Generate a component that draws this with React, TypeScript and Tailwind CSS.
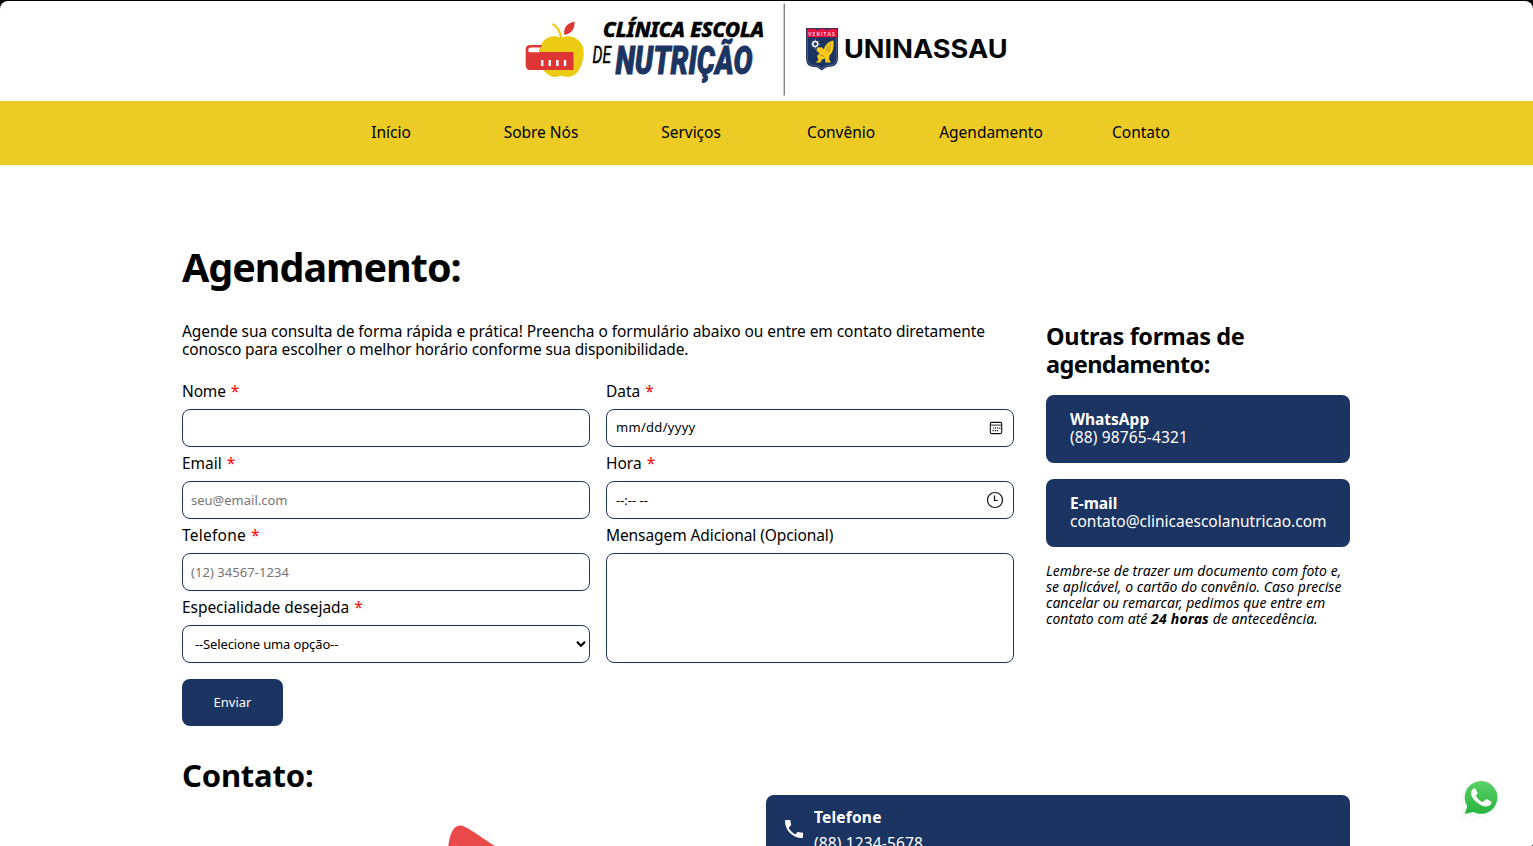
import type { ReactNode } from "react";

const navItems = ["Início", "Sobre Nós", "Serviços", "Convênio", "Agendamento", "Contato"];

const fieldBox =
  "h-[38px] w-full rounded-lg border border-[#1c3461] bg-white text-[13px] leading-[18px]";

function Logo() {
  return (
    <svg width="493" height="100" viewBox="520 0 493 100" role="img">
      {/* apple */}
      <path d="M561 38C556 34.500 547 36 542.500 42C538 48 539 58 541 65C543.500 73 551 78.500 558 76.500Q561 75 564 76.500C571 78 577.500 74.500 580.500 67C584 60 585 50 581.800 44.500C577 36 567 34.500 561 38Z" fill="#ebcb13" />
      <path d="M552.300 24C556.500 25.500 560.200 31 561 38" fill="none" stroke="#ebcb13" strokeWidth="2.200" />
      <path d="M564.500 35C563 29 566 23.500 574.500 21.500C575 29 571.500 33.500 564.500 35Z" fill="#dd3634" />
      {/* measuring tape */}
      <path d="M530 45H542Q540 48 539.500 52H573.500V70H530Q525.700 70 525.700 65V50Q525.700 45 530 45Z" fill="#dd3634" />
      <path d="M531 47.500H540.500Q539.300 50 539.200 52.300H531Q528.200 52.300 528.200 50Q528.200 47.500 531 47.500Z" fill="#fff" />
      <path d="M542.200 60v6M549.800 60v6M557.400 60v6M565 60v6" stroke="#fff" strokeWidth="2.400" />
      <g fontStyle="italic">
        <text x="603" y="37.200" fontFamily="'Noto Sans', sans-serif" fontSize="21" fontWeight="800" fill="#000" stroke="#000" strokeWidth="0.600" textLength="161" lengthAdjust="spacingAndGlyphs">CLÍNICA ESCOLA</text>
        <text x="592.500" y="63" fontSize="23.500" fontFamily="Roboto, sans-serif" fill="#000" stroke="#000" strokeWidth="0.500" textLength="18.500" lengthAdjust="spacingAndGlyphs">DE</text>
        <text x="615.500" y="74" fontSize="38.500" fontFamily="Roboto, sans-serif" fontWeight="900" fill="#1c3461" stroke="#1c3461" strokeWidth="0.900" textLength="137" lengthAdjust="spacingAndGlyphs">NUTRIÇÃO</text>
      </g>
      <path d="M784.300 3.500v92" stroke="#858585" strokeWidth="1.400" />
      {/* crest */}
      <path d="M806 28H838V58Q838 65 832 66.500L826 67.500L821.800 70.500L817.500 67.500L811 66.500Q806 65 806 58Z" fill="#1c3461" />
      <path d="M807.300 37.500V58Q807.300 63.500 812 65L818 66.300L821.800 68.700L825.500 66.300L831.500 65Q836.700 63.500 836.700 58V37.500" fill="none" stroke="#8793ad" strokeWidth="0.500" />
      <path d="M806.800 28.800H815L817 30.500L819 28.800H825L827 30.500L829 28.800H837.200V37.200H806.800Z" fill="#e4123f" />
      <text x="808.300" y="35.600" fontFamily="'Open Sans', sans-serif" fontSize="5" fontWeight="700" fill="#f9c9d2" textLength="26.500">VERITAS</text>
      <path d="M833.500 40.500C834 46 833.500 52 829.500 55.500L829 59L831 62.500H825.500L825 58.500L822 59.500L820.500 62.500H815.500L818.500 60L817 56L819.500 53.500L816.500 50.500L817 47.500L821.500 47.200L824 49.500C824.500 45.500 828 41.500 833.500 40.500Z" fill="#f6c91c" />
      <path d="M828 44.500L826.500 51M831 43.500L828.500 52M820.500 55L824 56.500" stroke="#7b6b2a" strokeWidth="0.600" />
      <circle cx="815.300" cy="44" r="2.400" fill="none" stroke="#fff" strokeWidth="1.500" />
      <path d="M815.300 39.500v2M815.300 46.500v2M810.800 44h2M817.800 44h2M812.200 40.900l1.200 1.200M818.400 40.900l-1.200 1.200M812.200 47.100l1.200-1.200" stroke="#dfe5f0" strokeWidth="0.800" />
      <text x="844" y="57.800" fontFamily="Inter, sans-serif" fontSize="25.500" fontWeight="700" fill="#050708" textLength="163.500" lengthAdjust="spacingAndGlyphs">UNINASSAU</text>
    </svg>
  );
}

function CalendarIcon() {
  return (
    <svg width="14" height="14" viewBox="0 0 14 14" fill="none" stroke="#111" strokeWidth="1.100">
      <rect x="1.300" y="1.400" width="11.400" height="11.200" rx="1.500" />
      <path d="M1.300 4.100h11.400" strokeWidth="0.900" />
      <path d="M5.800 7.200h1.200M8 7.200h1.200M10.200 7.200h1.200M3.500 9.600h1.200M5.800 9.600h1.200M8 9.600h1.200M3.900 7.200h0.800" strokeWidth="1.200" />
    </svg>
  );
}

function ClockIcon() {
  return (
    <svg width="18" height="18" viewBox="0 0 18 18" fill="none" stroke="#111" strokeWidth="1.200">
      <circle cx="9" cy="9" r="7.500" />
      <path d="M8.500 4.500v5h3.200" />
    </svg>
  );
}

function PhoneIcon() {
  return (
    <svg width="24" height="24" viewBox="0 0 24 24" fill="#fff">
      <path d="M6.620 10.790c1.440 2.830 3.760 5.140 6.590 6.590l2.200-2.200c.27-.27.67-.36 1.020-.24 1.120.37 2.330.57 3.570.57.550 0 1 .45 1 1V20c0 .55-.45 1-1 1-9.390 0-17-7.610-17-17 0-.55.45-1 1-1h3.500c.55 0 1 .45 1 1 0 1.250.2 2.450.57 3.570.11.350.030.740-.25 1.020l-2.200 2.200z" />
    </svg>
  );
}

function WhatsAppBadge() {
  return (
    <svg width="40" height="40" viewBox="0 0 40 40">
      <defs>
        <linearGradient id="wa" x1="0" y1="0" x2="0" y2="1">
          <stop offset="0" stopColor="#5dd068" />
          <stop offset="1" stopColor="#27b43e" />
        </linearGradient>
      </defs>
      <path d="M1.200 37.500L4.500 27.500A18 18 0 1 1 12.500 35Z" fill="#fff" stroke="#f0f0f0" strokeWidth="0.800" />
      <path d="M4.800 34L7.200 26.200A16.400 16.400 0 1 1 13.500 32Z" fill="url(#wa)" />
      <path d="M15.800 9.200C15.300 8.200 14.400 8.200 13.700 8.400C12.600 9 10.800 10.800 11 13.800C11.400 18.800 19.500 26 25.500 26.500C28.500 26.700 30.800 25 31.200 23.500C31.500 22.300 31.400 21.600 30.800 21.200L26.800 19.300C26 19 25.500 19.200 25 19.800L23.500 21.500C23 22 22.500 22 21.900 21.700C19.500 20.600 17.500 18.500 16.200 16.200C15.900 15.600 16.100 15.200 16.500 14.700C17.200 13.900 17.700 13.400 17.400 12.700Z" fill="#fff" />
    </svg>
  );
}

function Field({ label, labelClass = "", required, children }: { label: string; labelClass?: string; required?: boolean; children: ReactNode }) {
  return (
    <div>
      <div className="mb-[9px] flex h-[18px] items-center">
        <span className={"whitespace-nowrap " + labelClass}>{label}</span>
        {required && <span className="ml-[5px] text-[#f00]">*</span>}
      </div>
      {children}
    </div>
  );
}

function InfoCard({ title, value, valueClass }: { title: string; value: string; valueClass: string }) {
  return (
    <div className="h-[68px] rounded-lg bg-[#1c3461] pl-6 pt-[15px] text-white">
      <div className="font-bold">{title}</div>
      <div className={valueClass}>{value}</div>
    </div>
  );
}

export default function App() {
  return (
    <div className="h-[846px] overflow-hidden bg-black pt-px font-['Noto_Sans',sans-serif] text-[15.5px] leading-[18px] text-black">
      <div className="relative flex h-[845px] flex-col overflow-hidden rounded-t-lg rounded-br-[2px] bg-white">
        <header className="-mt-px flex h-[101px] shrink-0 justify-center">
          <Logo />
        </header>
        <nav className="flex h-16 shrink-0 items-center justify-center bg-[#ebcb24] pb-0.5 pr-px">
          {navItems.map((item) => (
            <a key={item} href="#" className="w-[150px] text-center tracking-[-0.02px]">{item}</a>
          ))}
        </nav>

        <main className="ml-[182px] mt-[79px] w-[1168px] shrink-0">
          <h1 className="h-[46px] text-[39.5px] font-bold leading-[46px] tracking-[-1.02px]">Agendamento:</h1>
          <div className="mt-[32px] flex gap-8">
            <section className="w-[832px] shrink-0">
              <p className="whitespace-nowrap">
                <span className="tracking-[-0.064px]">
                  Agende sua consulta de forma rápida e prática! Preencha o formulário abaixo ou entre em contato diretamente
                </span>
                <br />
                <span className="tracking-[-0.12px]">conosco para escolher o melhor horário conforme sua disponibilidade.</span>
              </p>
              <form className="mt-6 grid grid-cols-2 gap-x-4">
                <div className="flex flex-col gap-[7px]">
                  <Field label="Nome" labelClass="tracking-[-0.15px]" required>
                    <input className={fieldBox + " block px-2"} />
                  </Field>
                  <Field label="Email" required>
                    <input className={fieldBox + " block px-2 placeholder:text-[#757575]"} placeholder="seu@email.com" />
                  </Field>
                  <Field label="Telefone" labelClass="tracking-[0.24px]" required>
                    <input className={fieldBox + " block px-2 tracking-[0.06px] placeholder:text-[#757575]"} placeholder="(12) 34567-1234" />
                  </Field>
                  <Field label="Especialidade desejada" labelClass="tracking-[-0.05px]" required>
                    <div className={fieldBox + " flex items-center justify-between pl-3 pr-[3px] tracking-[-0.13px]"}>
                      <span>--Selecione uma opção--</span>
                      <svg width="10" height="8" viewBox="0 0 10 8" fill="none" stroke="#000" strokeWidth="2">
                        <path d="M1 1.800L5 5.800L9 1.800" />
                      </svg>
                    </div>
                  </Field>
                </div>
                <div className="flex flex-col gap-[7px]">
                  <Field label="Data" required>
                    <div className={fieldBox + " flex items-center justify-between pl-[9px] pr-[10px]"}>
                      <span className="pb-0.5 tracking-[0.3px]">mm/dd/yyyy</span>
                      <CalendarIcon />
                    </div>
                  </Field>
                  <Field label="Hora" required>
                    <div className={fieldBox + " flex items-center justify-between pl-[9px] pr-[9px]"}>
                      <span>--:-- --</span>
                      <ClockIcon />
                    </div>
                  </Field>
                  <Field label="Mensagem Adicional (Opcional)" labelClass="tracking-[-0.09px]">
                    <textarea className="block h-[110px] w-full resize-none rounded-lg border border-[#1c3461] p-2 text-[13px]" />
                  </Field>
                </div>
                <button type="button" className="mt-4 h-[47px] w-[101px] rounded-lg bg-[#1c3461] pb-0.5 text-[13px] text-white">
                  Enviar
                </button>
              </form>
            </section>

            <aside className="w-[304px] shrink-0">
              <h2 className="text-[23.5px] font-bold leading-[28px] tracking-[-0.35px]">
                Outras formas de
                <br />
                <span className="tracking-[-0.6px]">agendamento:</span>
              </h2>
              <div className="mt-[17px] flex flex-col gap-4">
                <InfoCard title="WhatsApp" value="(88) 98765-4321" valueClass="tracking-[0.14px]" />
                <InfoCard title="E-mail" value="contato@clinicaescolanutricao.com" valueClass="" />
              </div>
              <p className="mt-4 whitespace-nowrap text-[14px] italic leading-4 tracking-[0.04px]">
                Lembre-se de trazer um documento com foto e,
                <br />
                se aplicável, o cartão do convênio. Caso precise
                <br />
                cancelar ou remarcar, pedimos que entre em
                <br />
                contato com até <b className="tracking-[0.2px]">24 horas</b> de antecedência.
              </p>
            </aside>
          </div>

          <h2 className="mt-[31px] h-[38px] text-[31px] font-bold leading-[37px] tracking-[-0.2px]">Contato:</h2>
          <div className="flex justify-between">
            <div className="pl-[266px] pt-[30px]">
              <svg width="64" height="21" viewBox="0 0 64 21">
                <path d="M0 23C1.500 11 4.500 0.500 12 0.500C18 0.500 28 9 50 23Z" fill="#ea4b4a" />
                <path d="M6 21L8 20L10 21Z" fill="#ee7271" />
              </svg>
            </div>
            <div className="flex h-[84px] w-[584px] rounded-lg bg-[#1c3461] pl-4 text-white">
              <span className="pt-[22px]"><PhoneIcon /></span>
              <div className="pl-2 pt-[13px]">
                <div className="font-bold tracking-[0.2px]">Telefone</div>
                <div className="mt-2 tracking-[0.14px]">(88) 1234-5678</div>
              </div>
            </div>
          </div>
        </main>

        <a href="#" className="absolute left-[1460px] top-[779px]"><WhatsAppBadge /></a>
      </div>
    </div>
  );
}
